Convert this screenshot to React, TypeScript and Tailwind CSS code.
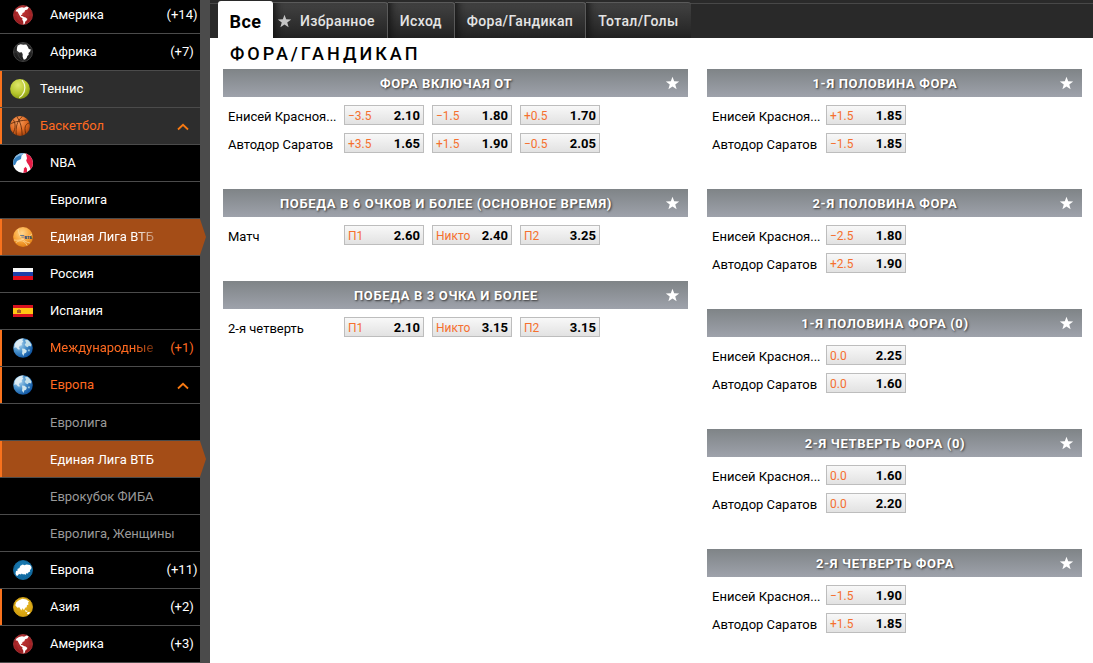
import type { ReactNode } from "react";
import clsx from "clsx";

type MenuItem = {
  label: string;
  icon?: ReactNode;
  count?: string;
  sport?: boolean;
  marked?: boolean;
  highlighted?: boolean;
  selected?: boolean;
  open?: boolean;
  muted?: boolean;
  nested?: boolean;
  fade?: boolean;
};

type Outcome = { name: string; odds: string };
type Market = { title: string; rows: { label: string; outcomes: Outcome[] }[] };

const AMERICA =
  "M3.500 4.400 6 2.900l3-.6 2 .5 2.800-1.300 1.900.9-1.300 2-2.300.9-.8 2-1.800.7-.3 1.700-1.300.2.300 1 1.700.4.900.8 1.900.5 1.700 1.400-.8 1.600-1.300 1-.6 2.200-1.200.8-.3-3.300-1-1.500.3-1.600-2-1.200L5.500 8.600 4.700 6.800 2.500 6.300z";
const AFRICA =
  "M4.600 3.400 7.500 2.200l2.800.5 3-.2 1.500 2.200 1 2.300 2.100.4-.8 2-1.600 1.700.2 1.700-1.500 1.300-.5 2-1.600 1.500-1.500-.2-1-2.600.1-2.600-.9-1.900-2.500.1-2.500-1.900.2-2.600z";
const EUROPE =
  "M2.500 13.600 3 11l1.700-.6-.3-1.500 2-.9 1-2.300 2.400-1.200 1.600.8 2.100-.9 3.500.5 1.500 2-.4 2.200-1.200.9.300 1.600-1.700.6-.6 1.400-1.600-.3-.9 1.700-1.200-.9-1.200.4-1.200-1-.9.9-1.300-.5-1.200.7-.7 1.200-1.500-.2z";
const ASIA =
  "M2.300 8.200 3.300 5.300 6 3.300l3.400-1.500 3.900.7 2.900 2.200-1.200.9.5 1.900-1.600.7-.2 2-1.600.6-.8 2-1.300-.4-.6-1.300-1 2.500-1.200-1.800-.9-1.500-1.900.4-1.100-1.300zM12 13.200l2.500.9-.4.8-2.100-.7zM14.300 15.400l1.900-.6.9.9-1.500 1.500-1.700-.3z";

function Continent({ path, light, dark, rim }: { path: string; light: string; dark: string; rim: string }) {
  const id = `continent-${dark.slice(1)}`;
  return (
    <svg viewBox="0 0 20 20" className="size-5" aria-hidden="true">
      <defs>
        <radialGradient id={id} cx="0.5" cy="0.35" r="0.65">
          <stop offset="0" stopColor={light} />
          <stop offset="1" stopColor={dark} />
        </radialGradient>
      </defs>
      <circle cx="10" cy="10" r="9.500" fill={`url(#${id})`} stroke={rim} strokeWidth="0.800" />
      <path d="M1 10h18M10 1c-7 5-7 13 0 18M10 1c7 5 7 13 0 18" stroke={rim} strokeWidth="0.500" fill="none" />
      <path d={path} fill="#fff" />
    </svg>
  );
}

function Globe() {
  return (
    <svg viewBox="0 0 20 20" className="size-5" aria-hidden="true">
      <defs>
        <radialGradient id="globe" cx="0.3" cy="0.3" r="0.8">
          <stop offset="0" stopColor="#b8dcf2" />
          <stop offset="0.5" stopColor="#468fca" />
          <stop offset="1" stopColor="#0a4f9e" />
        </radialGradient>
      </defs>
      <circle cx="10" cy="10" r="9.800" fill="url(#globe)" />
      <path d="M2 5.500C4 2 7.500.5 10.500.6L9.300 2.300l1 1.200-1.600 1.700.2 2-2.300.6-.8 2 1.500 1.400-2.100.4L3 9.200 1.200 10z" fill="#e4f1f6" opacity="0.900" />
      <path d="M12 2.300l2.700-.5 2.300 2.400 1.400 2.300-.3 2.100-2.200-.9-1.300 1.500-2-.9-.9-2 1.300-1.200z" fill="#c4dfe9" />
      <path d="M9 10.500l2.600.2 2.300 2-.9 2-1.800.9-.7 2.500-1.500-2.600.3-2z" fill="#cfe5ed" />
      <path d="M15.500 11.200l1.500.5-.6 1.900-1.600-.5z" fill="#9bc8e0" />
    </svg>
  );
}

function TennisBall() {
  return (
    <svg viewBox="0 0 20 20" className="size-5" aria-hidden="true">
      <defs>
        <radialGradient id="tennis" cx="0.4" cy="0.3" r="0.750">
          <stop offset="0" stopColor="#dfe76b" />
          <stop offset="0.6" stopColor="#b5c52c" />
          <stop offset="1" stopColor="#83940f" />
        </radialGradient>
      </defs>
      <circle cx="10" cy="10" r="9.900" fill="url(#tennis)" />
      <path d="M12 1c3.600 4.500 4 10.500.2 15.200-1 1.200-2 1.800-3 2.300" fill="none" stroke="#f5f7d0" strokeWidth="1.200" />
    </svg>
  );
}

function Basketball() {
  return (
    <svg viewBox="0 0 20 20" className="size-5" aria-hidden="true">
      <defs>
        <radialGradient id="basket" cx="0.4" cy="0.3" r="0.750">
          <stop offset="0" stopColor="#f9a060" />
          <stop offset="0.6" stopColor="#df6a22" />
          <stop offset="1" stopColor="#9e3e0a" />
        </radialGradient>
      </defs>
      <circle cx="10" cy="10" r="9.900" fill="url(#basket)" />
      <path
        d="M1 7.500C7 5 12 4.500 17.500 4M7 .8c3.500 5 5 11 5.200 18.800M12.300.5C7 5 5.500 11 6.300 19.200M3 3.500c3 3.500 2.500 9 .2 13.500M19 7c-4 1-5 5.500-3 11"
        fill="none"
        stroke="#572408"
        strokeWidth="0.800"
      />
    </svg>
  );
}

function NbaBall() {
  return (
    <svg viewBox="0 0 20 20" className="size-5" aria-hidden="true">
      <defs>
        <clipPath id="nba"><circle cx="10" cy="10" r="10" /></clipPath>
      </defs>
      <g clipPath="url(#nba)">
        <rect width="20" height="20" fill="#fff" />
        <path d="M0 0h11L8.500 2.500 8 6 4 8 2 12 0 12z" fill="#3581c0" />
        <path d="M13 0h7v16h-2.500L16 12.500l-2-3-.8-2L14 5.200 13.500 3z" fill="#e51c45" />
        <path d="M12.500 13.800l1.500 2V20h-3.600l.6-4.500z" fill="#e51c45" />
        <path d="M0 8C1 3 5 0 10 0l-1 2C5 2.500 2 5 0 8z" fill="#8bbbe0" />
      </g>
    </svg>
  );
}

function VtbBall() {
  return (
    <svg viewBox="0 0 20 20" className="size-5" aria-hidden="true">
      <defs>
        <radialGradient id="vtb" cx="0.45" cy="0.3" r="0.700">
          <stop offset="0" stopColor="#ffd58c" />
          <stop offset="0.6" stopColor="#f9a63a" />
          <stop offset="1" stopColor="#e07f14" />
        </radialGradient>
      </defs>
      <circle cx="10" cy="10" r="9.900" fill="url(#vtb)" />
      <path d="M1 13c6 1 12-1 18-6M3 15.500c5-3.500 9-1.500 11 3M5 2c1 7 5 13 12 14" fill="none" stroke="#fbe0a8" strokeWidth="0.700" />
      <path d="M7.500 8h4l-.5 1H7zM8.500 9.800h3l-.4.8H8.200z" fill="#667a91" />
      <text x="11.500" y="12.300" fontSize="4" fontWeight="900" fill="#173e75">ВТБ</text>
    </svg>
  );
}

function RussiaFlag() {
  return (
    <svg viewBox="0 0 20 12" className="h-3 w-5" aria-hidden="true">
      <path d="M0 0h20v4H0z" fill="#f6f6f6" />
      <path d="M0 4h20v4H0z" fill="#1c3fa8" />
      <path d="M0 8h20v4H0z" fill="#e40b1b" />
    </svg>
  );
}

function SpainFlag() {
  return (
    <svg viewBox="0 0 20 12" className="h-3 w-5" aria-hidden="true">
      <path d="M0 0h20v12H0z" fill="#d8121f" />
      <path d="M0 3h20v6H0z" fill="#ffc514" />
      <path d="M4 5h1l1-1 1 1h1v3H4z" fill="#a65a26" />
    </svg>
  );
}

function Chevron() {
  return (
    <svg viewBox="0 0 12 8" className="mt-0.5 ml-0.5 h-2 w-3" aria-hidden="true">
      <path d="M1 6.500 6 1.800l5 4.700" fill="none" stroke="#f97a12" strokeWidth="1.800" />
    </svg>
  );
}

function Star({ className }: { className?: string }) {
  return (
    <svg viewBox="0 0 24 24" className={className} fill="currentColor" aria-hidden="true">
      <path d="M12 1l2.700 7.500 8 .2-6.300 4.900 2.200 7.700L12 16.800l-6.600 4.500 2.200-7.700L1.300 8.700l8-.2z" />
    </svg>
  );
}

const america = <Continent path={AMERICA} light="#c23434" dark="#94181c" rim="#a8383b" />;

const menu: MenuItem[] = [
  { label: "Америка", icon: america, count: "(+14)" },
  { label: "Африка", icon: <Continent path={AFRICA} light="#3c3c3c" dark="#161616" rim="#4d4d4d" />, count: "(+7)" },
  { label: "Теннис", icon: <TennisBall />, sport: true, marked: true },
  { label: "Баскетбол", icon: <Basketball />, sport: true, marked: true, highlighted: true, open: true },
  { label: "NBA", icon: <NbaBall /> },
  { label: "Евролига" },
  { label: "Единая Лига ВТБ", icon: <VtbBall />, marked: true, selected: true, fade: true },
  { label: "Россия", icon: <RussiaFlag /> },
  { label: "Испания", icon: <SpainFlag /> },
  { label: "Международные", icon: <Globe />, count: "(+1)", marked: true, highlighted: true, fade: true },
  { label: "Европа", icon: <Globe />, marked: true, highlighted: true, open: true },
  { label: "Евролига", nested: true, muted: true },
  { label: "Единая Лига ВТБ", nested: true, marked: true, selected: true },
  { label: "Еврокубок ФИБА", nested: true, muted: true },
  { label: "Евролига, Женщины", nested: true, muted: true },
  { label: "Европа", icon: <Continent path={EUROPE} light="#1f82b8" dark="#0c6299" rim="#1874a9" />, count: "(+11)" },
  { label: "Азия", icon: <Continent path={ASIA} light="#efc42e" dark="#d09a08" rim="#dcaa1c" />, count: "(+2)", marked: true },
  { label: "Америка", icon: america, count: "(+3)" },
];

const TEAM_A = "Енисей Красноя...";
const TEAM_B = "Автодор Саратов";

const pair = (title: string, a: Outcome, b: Outcome): Market => ({
  title,
  rows: [
    { label: TEAM_A, outcomes: [a] },
    { label: TEAM_B, outcomes: [b] },
  ],
});

const leftMarkets: Market[] = [
  {
    title: "Фора включая ОТ",
    rows: [
      {
        label: TEAM_A,
        outcomes: [
          { name: "−3.5", odds: "2.10" },
          { name: "−1.5", odds: "1.80" },
          { name: "+0.5", odds: "1.70" },
        ],
      },
      {
        label: TEAM_B,
        outcomes: [
          { name: "+3.5", odds: "1.65" },
          { name: "+1.5", odds: "1.90" },
          { name: "−0.5", odds: "2.05" },
        ],
      },
    ],
  },
  {
    title: "Победа в 6 очков и более (основное время)",
    rows: [
      {
        label: "Матч",
        outcomes: [
          { name: "П1", odds: "2.60" },
          { name: "Никто", odds: "2.40" },
          { name: "П2", odds: "3.25" },
        ],
      },
    ],
  },
  {
    title: "Победа в 3 очка и более",
    rows: [
      {
        label: "2-я четверть",
        outcomes: [
          { name: "П1", odds: "2.10" },
          { name: "Никто", odds: "3.15" },
          { name: "П2", odds: "3.15" },
        ],
      },
    ],
  },
];

const rightMarkets: Market[] = [
  pair("1-я половина фора", { name: "+1.5", odds: "1.85" }, { name: "−1.5", odds: "1.85" }),
  pair("2-я половина фора", { name: "−2.5", odds: "1.80" }, { name: "+2.5", odds: "1.90" }),
  pair("1-я половина фора (0)", { name: "0.0", odds: "2.25" }, { name: "0.0", odds: "1.60" }),
  pair("2-я четверть фора (0)", { name: "0.0", odds: "1.60" }, { name: "0.0", odds: "2.20" }),
  pair("2-я четверть фора", { name: "−1.5", odds: "1.90" }, { name: "+1.5", odds: "1.85" }),
];

const tabs = ["Избранное", "Исход", "Фора/Гандикап", "Тотал/Голы"];

function SidebarItem({ item }: { item: MenuItem }) {
  return (
    <li
      className={clsx(
        "relative h-[37px] border-b border-[#4b4b4b]",
        item.selected ? "bg-[#a44d17]" : item.sport ? "bg-[#2d2d2d]" : "bg-black",
      )}
    >
      <a
        href="#"
        className={clsx(
          "flex h-full items-center border-l-2 text-[13px]",
          item.marked ? "border-[#f9721d]" : "border-transparent",
          item.sport ? "pl-2" : "pl-[11px]",
          item.nested && "pt-0.5",
          item.highlighted ? "text-[#ff6a20]" : item.muted ? "text-[#999]" : "text-white",
        )}
      >
        <span className={clsx("flex shrink-0 items-center", item.sport ? "w-[30px]" : "w-[37px]")}>{item.icon}</span>
        <span
          className={clsx(
            "flex-1 whitespace-nowrap",
            item.fade && "[mask-image:linear-gradient(to_right,#000_85px,transparent_115px)]",
          )}
        >
          {item.label}
        </span>
        {(item.count || item.open) && (
          <span className="flex w-9 shrink-0 justify-center">{item.open ? <Chevron /> : item.count}</span>
        )}
      </a>
      {item.selected && (
        <span className="absolute top-0 left-full h-9 w-[6px] bg-[#a44d17] [clip-path:polygon(0_0,100%_50%,0_100%)]" />
      )}
    </li>
  );
}

function MarketBlock({ market, labelClass }: { market: Market; labelClass: string }) {
  return (
    <section>
      <header className="flex h-7 items-center bg-linear-to-b from-[#7f8487] to-[#9ea2ab] pr-2 pl-1 text-white">
        <h2 className="flex-1 pt-0.5 text-center text-[13px] font-bold tracking-wider uppercase [text-shadow:1px_1px_2px_#333]">
          {market.title}
        </h2>
        <button type="button" aria-label="В избранное" className="shrink-0">
          <Star className="size-[15px]" />
        </button>
      </header>
      <div className="pt-1">
        {market.rows.map((row) => (
          <div key={row.label} className="flex h-7 items-center pl-[5px]">
            <span className={clsx("shrink-0 pt-[3px] text-[13px] whitespace-nowrap text-black", labelClass)}>
              {row.label}
            </span>
            <div className="flex gap-2">
              {row.outcomes.map((outcome) => (
                <button
                  type="button"
                  key={outcome.name}
                  className="flex h-5 w-20 items-center justify-between border border-[#bdbdbd] bg-linear-to-b from-[#f8f8f8] to-[#e2e2e2] px-[3px] pt-0.5"
                >
                  <span className="text-xs text-[#f5702f]">{outcome.name}</span>
                  <span className="text-[13px] font-bold text-black">{outcome.odds}</span>
                </button>
              ))}
            </div>
          </div>
        ))}
      </div>
    </section>
  );
}

export default function App() {
  return (
    <div className="flex h-screen overflow-hidden bg-white font-[Roboto,sans-serif]">
      <nav className="w-[210px] shrink-0 overflow-hidden bg-[#4b4b4b] pr-[10px]">
        <ul className="-mt-[3px]">
          {menu.map((item, i) => (
            <SidebarItem key={i} item={item} />
          ))}
        </ul>
      </nav>

      <main className="min-w-0 flex-1">
        {/* Market tabs */}
        <div className="flex h-[38px] items-end bg-[linear-gradient(#2a2a2a_3px,#484848_3px,#484848_4px,#292929_4px)] pl-2">
          <button
            type="button"
            className="h-[37px] w-[55px] rounded-t-[3px] bg-white pt-1 text-lg font-bold tracking-wide text-black"
          >
            Все
          </button>
          {tabs.map((tab, i) => (
            <button
              type="button"
              key={tab}
              className="flex h-9 items-center rounded-tr-[3px] border-t border-r border-[#5a5a5a] bg-linear-to-b from-[#424242] to-[#232323] px-3 pt-px text-sm font-medium tracking-wide text-[#e4e4e4] shadow-[inset_8px_0_8px_-6px_#111] last:border-r-0"
            >
              {i === 0 && <Star className="mr-2 -ml-2 size-[15px] text-[#c4c4c4]" />}
              {tab}
            </button>
          ))}
        </div>

        <h1 className="flex h-[31px] items-center pl-5 text-lg font-medium tracking-[3px] text-black uppercase">
          Фора/Гандикап
        </h1>

        <div className="flex items-start gap-[19px] pr-[11px] pl-[13px]">
          <div className="flex min-w-0 flex-[465] flex-col gap-8">
            {leftMarkets.map((market) => (
              <MarketBlock key={market.title} market={market} labelClass="w-[116px]" />
            ))}
          </div>
          <div className="flex min-w-0 flex-[375] flex-col gap-8">
            {rightMarkets.map((market) => (
              <MarketBlock key={market.title} market={market} labelClass="w-[114px]" />
            ))}
          </div>
        </div>
      </main>
    </div>
  );
}
